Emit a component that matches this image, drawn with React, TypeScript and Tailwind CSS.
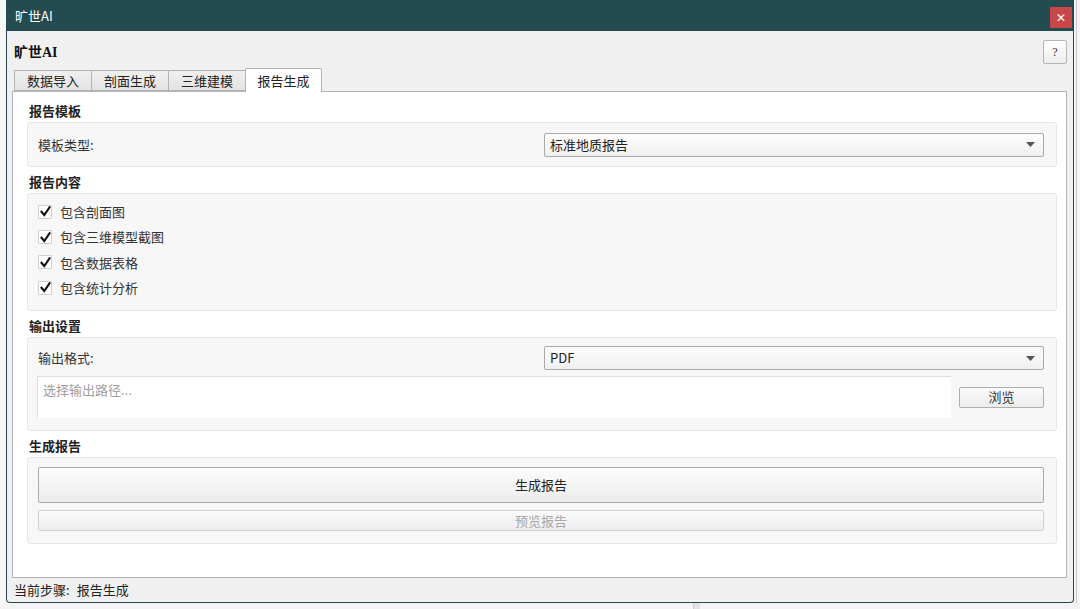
import React from "react";

const font = { fontFamily: '"Noto Sans CJK SC", "Noto Sans", sans-serif' };

function Combo({ value }: { value: string }) {
  return (
    <div className="w-[500px] h-[24px] border border-[#a9a9a9] rounded-[2px] bg-gradient-to-b from-[#fdfdfd] to-[#f0f0f0] flex items-center justify-between pl-[5px] pr-[8px] text-[13px] text-[#222]">
      <span>{value}</span>
      <svg width="9" height="5" viewBox="0 0 9 5">
        <path d="M0 0 L9 0 L4.5 5 Z" fill="#555" />
      </svg>
    </div>
  );
}

function Check({ label }: { label: string }) {
  return (
    <div className="h-[25.4px] flex items-center gap-[8px]">
      <div className="w-[14px] h-[14px] border border-[#cfcfcf] bg-white flex items-center justify-center rounded-[1px]">
        <svg width="11" height="11" viewBox="0 0 11 11">
          <path d="M1.5 5.8 L4.3 9 L9.6 1.2" stroke="#111" strokeWidth="2.1" fill="none" strokeLinecap="square" />
        </svg>
      </div>
      <span className="text-[13px] text-[#333]">{label}</span>
    </div>
  );
}

function GroupTitle({ children }: { children: React.ReactNode }) {
  return (
    <div className="h-[22px] flex items-center pl-[2px] text-[13px] font-bold text-[#222]">{children}</div>
  );
}

function Box({ children, className }: { children: React.ReactNode; className: string }) {
  return (
    <div className={"bg-[#f7f7f7] border border-[#e6e6e6] rounded-[3px] " + className}>{children}</div>
  );
}

export default function App() {
  const tabs = ["数据导入", "剖面生成", "三维建模"];
  return (
    <div className="w-[1080px] h-[609px] bg-[#f4f4f4] overflow-hidden flex flex-col" style={font}>
      <div className="flex h-[603px]">
        <div className="w-[6px] bg-[#f7f7f7]" />
        <div className="w-[1068px] h-[603px] border border-[#244a4f] border-t-0 rounded-br-[4px] rounded-bl-[4px] bg-[#f0f0f0] flex flex-col overflow-hidden">
          {/* title bar */}
          <div className="h-[31px] bg-[#244b50] flex items-center justify-between pl-[8px] pr-[1px] shrink-0">
            <span className="text-white text-[13px]">旷世AI</span>
            <div className="w-[22px] h-[21px] bg-[#c9474a] flex items-center justify-center text-white text-[11px] font-bold leading-none mt-[4px]">×</div>
          </div>
          {/* header */}
          <div className="h-[37px] flex items-center justify-between pl-[7px] pr-[6px] pt-[5px] shrink-0">
            <span className="text-[14px] font-bold text-[#111]" style={{ fontFamily: '"Liberation Serif", "Noto Sans CJK SC", serif' }}>旷世AI</span>
            <div className="w-[24px] h-[24px] border border-[#b5b5b5] rounded-[2px] bg-gradient-to-b from-[#ffffff] to-[#ededed] flex items-center justify-center text-[12px] text-[#333]" style={{ fontFamily: '"Liberation Serif", serif' }}>?</div>
          </div>
          {/* tabs */}
          <div className="h-[23px] flex items-end pl-[7px] shrink-0 relative z-10">
            {tabs.map((t) => (
              <div key={t} className="w-[77px] h-[21px] border border-[#b3b3b3] border-r-0 bg-gradient-to-b from-[#f0f0f0] to-[#e3e3e3] flex items-center justify-center text-[13px] text-[#222]">
                {t}
              </div>
            ))}
            <div className="w-[77px] h-[24px] border border-[#b3b3b3] border-b-0 bg-white rounded-t-[2px] flex items-center justify-center text-[13px] text-[#222] mb-[-1px]">
              报告生成
            </div>
          </div>
          {/* panel */}
          <div className="ml-[5px] w-[1055px] h-[487px] bg-white border border-[#b3b3b3] shrink-0 pl-[14px] pr-[9px] pt-[8px] flex flex-col">
            <GroupTitle>报告模板</GroupTitle>
            <Box className="h-[45px] pl-[10px] pr-[12px] flex items-center justify-between mb-[4px]">
              <span className="text-[13px] text-[#333]">模板类型:</span>
              <Combo value="标准地质报告" />
            </Box>
            <GroupTitle>报告内容</GroupTitle>
            <Box className="h-[118px] pl-[10px] pt-[5px] flex flex-col mb-[4px]">
              <Check label="包含剖面图" />
              <Check label="包含三维模型截图" />
              <Check label="包含数据表格" />
              <Check label="包含统计分析" />
            </Box>
            <GroupTitle>输出设置</GroupTitle>
            <Box className="h-[94px] pl-[9px] pr-[12px] pt-[8px] flex flex-col mb-[4px]">
              <div className="flex items-center justify-between pl-[1px]">
                <span className="text-[13px] text-[#333]">输出格式:</span>
                <Combo value="PDF" />
              </div>
              <div className="flex items-center justify-between mt-[6px]">
                <div className="w-[914px] h-[42px] bg-white border-l border-t border-[#dcdcdc] pl-[5px] pt-[3px] text-[13px] text-[#a0a0a0]">选择输出路径...</div>
                <div className="w-[85px] h-[21px] border border-[#adadad] rounded-[2px] bg-gradient-to-b from-[#fbfbfb] to-[#ececec] flex items-center justify-center text-[13px] text-[#333]">浏览</div>
              </div>
            </Box>
            <GroupTitle>生成报告</GroupTitle>
            <Box className="h-[87px] pl-[10px] pr-[12px] pt-[9px] flex flex-col gap-[7px]">
              <div className="h-[36px] border border-[#a9a9a9] rounded-[2px] bg-gradient-to-b from-[#fcfcfc] to-[#ececec] flex items-center justify-center text-[13px] text-[#222]">生成报告</div>
              <div className="h-[21px] border border-[#d0d0d0] rounded-[2px] bg-gradient-to-b from-[#fafafa] to-[#ededed] flex items-center justify-center text-[13px] text-[#a8a8a8]">预览报告</div>
            </Box>
          </div>
          {/* status */}
          <div className="flex-1 flex items-center pl-[7px] text-[13px] text-[#222]">
            <span>当前步骤:</span>
            <span className="ml-[7px]">报告生成</span>
          </div>
        </div>
        <div className="flex-1 flex">
          <div className="w-[2px]" />
          <div className="w-[1px] bg-[#c9c9c9]" />
          <div className="flex-1 bg-[#f4f4f4]" />
        </div>
      </div>
      <div className="flex-1 flex">
        <div className="w-[693px]" />
        <div className="w-[7px] bg-[#e2e2e2] border-l border-[#d0d0d0]" />
        <div className="flex-1" />
      </div>
    </div>
  );
}
